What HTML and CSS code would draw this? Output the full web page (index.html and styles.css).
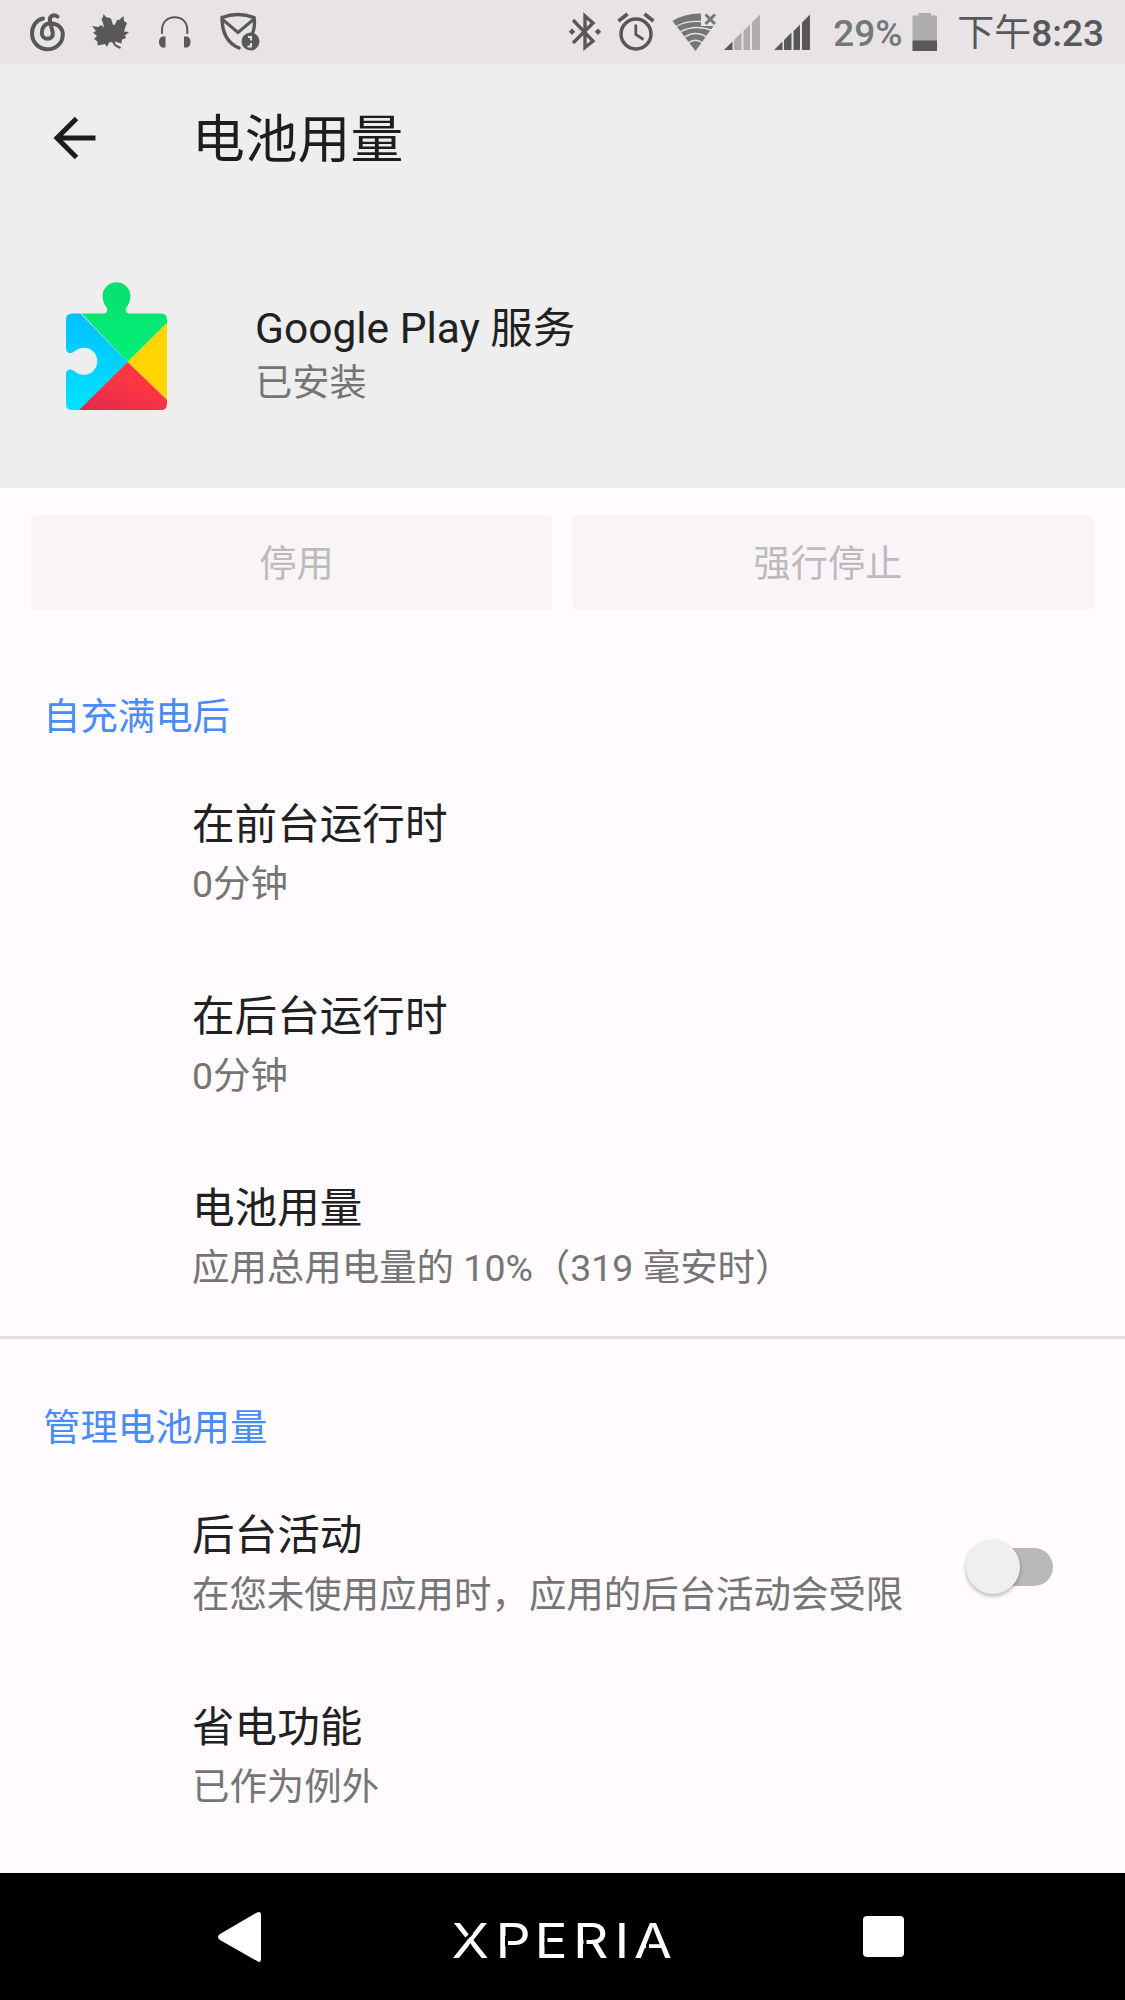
FILE: index.html
```html
<!DOCTYPE html>
<html lang="zh-CN">
<head>
    <meta charset="UTF-8">
    <meta name="viewport" content="width=device-width, initial-scale=1.0">
    <title>电池用量</title>
    <link rel="stylesheet" href="styles.css">
</head>
<body>

    <div class="status-bar">
        <div class="status-left">
            <svg width="60" height="64" viewBox="20 0 60 64" fill="none" stroke="#58585a" stroke-width="4" stroke-linecap="round">
                <path d="M43 18.500C36 20 32 26.500 32 33.500C32 42.500 39 49.300 47.500 49.300C56 49.300 62.800 43 62.800 34.500C62.800 27.500 57 23.200 50.500 23.200C44.500 23.200 41.800 28 41.800 32.500C41.800 36.500 44.500 38.800 47.500 38.800C51 38.800 53.300 36 52.700 32.500L50 21C49 16.500 53.500 13.500 57.500 16.500"/>
            </svg>
            <svg width="63" height="64" viewBox="80 0 63 64" fill="#58585a">
                <path d="M103.500 14L106 17L111 18.500L113 25L115 24.500L117 20L119 20L123.500 16L124 21L127 23L125 28L124 31.500L129 32L125 35.500L126 38L122 39.500L121.500 43.500L114.500 41.500L116 44.500L121 47L120 49L114.500 46L112 42L109 42.500L107 47L105 44L97.500 45.500L97.500 41.500L94 39L97 36L93 32.500L96 31L92 26L98.500 27L101 25L104 27.500L103 23L101.500 19L103 17Z"/>
            </svg>
            <svg width="62" height="64" viewBox="143 0 62 64">
                <path d="M162 34V30C162 22 167.500 17.300 174.700 17.300C182 17.300 187.300 22 187.300 30V34" fill="none" stroke="#58585a" stroke-width="2"/>
                <path d="M165.500 36.500V47.500H163C160.500 47.500 159 45 159 42C159 39 160.500 36.500 163 36.500ZM184 36.500V47.500H186.500C189 47.500 190.500 45 190.500 42C190.500 39 189 36.500 186.500 36.500Z" fill="#58585a"/>
            </svg>
            <svg width="70" height="64" viewBox="205 0 70 64">
                <path d="M222 17.500Q238 11.500 254 17.500C255 24 254.500 28 253 32M222 17.500C222 32 227 43 239 48" fill="none" stroke="#58585a" stroke-width="3.400" stroke-linecap="round"/>
                <path d="M222 19L238 32.500L254 19" fill="none" stroke="#58585a" stroke-width="3"/>
                <circle cx="250.500" cy="41.500" r="9" fill="#58585a"/>
                <path d="M248 37H251V40.500M251 43V46.500H247.500" fill="none" stroke="#e7e3e7" stroke-width="2"/>
            </svg>
        </div>
        <div class="status-right">
            <svg width="50" height="64" viewBox="560 0 50 64" fill="none" stroke="#58585a" stroke-width="3.400">
                <path d="M573 20L593 41L585 47.500V16L593 23L573 43"/>
                <path d="M572 28.500L575.200 31.700L572 34.900L568.800 31.700ZM598 28.500L601.200 31.700L598 34.900L594.800 31.700Z" fill="#58585a" stroke="none"/>
            </svg>
            <svg width="54" height="64" viewBox="610 0 54 64" fill="none" stroke="#58585a">
                <circle cx="636" cy="34" r="15" stroke-width="3.500"/>
                <path d="M635.800 24.500V34.500L643.500 39.500" stroke-width="2.800"/>
                <path d="M618.500 21L627.500 14M653.500 21L644.500 14" stroke-width="3.600"/>
            </svg>
            <svg width="56" height="64" viewBox="664 0 56 64">
                <path d="M672.500 21Q685 13 701 13.500V26H713.500L695.500 51Z" fill="#747775"/>
                <path d="M676 26.500Q686 20.500 701 21.500M680 32Q695.500 23.500 713 31M684 37.500Q695.500 29.500 707.500 37.500M688 43Q695.500 37.500 703 43" fill="none" stroke="#e7e3e7" stroke-width="1.300"/>
                <path d="M705.500 14.500L715 24M715 14.500L705.500 24" stroke="#747775" stroke-width="3"/>
            </svg>
            <svg width="47" height="64" viewBox="720 0 47 64">
                <path d="M724 50L732.500 41.500V50Z" fill="#58585a"/>
                <path d="M734 40L741.500 32.500V50H734ZM743.500 31L750 24.500V50H743.500ZM752 22.500L760 14.500V50H752Z" fill="#aeacae"/>
            </svg>
            <svg width="58" height="64" viewBox="767 0 58 64">
                <path d="M774 50L782.500 41.500V50ZM784 40L791.500 32.500V50H784ZM793.500 31L800 24.500V50H793.500ZM802 22.500L810 14.500V50H802Z" fill="#58585a"/>
            </svg>
            <span class="battery-level">29%</span>
            <svg width="25" height="64" viewBox="912 0 25 64">
                <path d="M912.500 15.500H918.500V13H931V15.500H937V41H912.500Z" fill="#aeacae"/>
                <path d="M912.500 40.500H937V51H912.500Z" fill="#58585a"/>
            </svg>
            <span class="clock">下午<b>8:23</b></span>
        </div>
    </div>

    <header>
        <div class="toolbar">
            <svg class="back" width="44" height="44" viewBox="0 0 44 44" fill="none" stroke="#1c1e1c" stroke-width="5">
                <path d="M43.500 22H4.500M24.500 2.500L5 22L24.500 41.500"/>
            </svg>
            <h1>电池用量</h1>
        </div>
        <div class="app-info">
            <svg class="app-icon" width="101" height="128" viewBox="67 282 100 128" preserveAspectRatio="none">
                <defs>
                    <clipPath id="puzzle">
                        <path d="M73 313.500H104C107 313.500 108.500 311 107.500 308C105 305 103.200 300 103.200 296A13.700 13.700 0 0 1 130.800 296C130.800 300 129 305 126.500 308C125.500 311 127 313.500 130 313.500H161Q167 313.500 167 319.500V404Q167 410 161 410H73Q67 410 67 404V374Q67 369.500 71 369.500C74 369.500 75 371 77 372.500A13.500 13.500 0 1 0 77 350C75 351.500 74 353 71 353Q67 353 67 348V319.500Q67 313.500 73 313.500Z"/>
                    </clipPath>
                    <linearGradient id="blue" x1="0" y1="0" x2="0" y2="1">
                        <stop offset="0" stop-color="#00bfff"/>
                        <stop offset="1" stop-color="#00e3ff"/>
                    </linearGradient>
                    <linearGradient id="red" x1="0" y1="1" x2="0.500" y2="0.300">
                        <stop offset="0" stop-color="#e0264f"/>
                        <stop offset="1" stop-color="#ff3743"/>
                    </linearGradient>
                    <linearGradient id="green" x1="0" y1="0" x2="0" y2="1">
                        <stop offset="0" stop-color="#0ade70"/>
                        <stop offset="1" stop-color="#00f076"/>
                    </linearGradient>
                </defs>
                <g clip-path="url(#puzzle)">
                    <path d="M67 282H167V323L128 362L67 297Z" fill="url(#green)"/>
                    <path d="M67 310H78L128 362L80 411H67Z" fill="url(#blue)"/>
                    <path d="M128 362L168 322V401Z" fill="#ffd500"/>
                    <path d="M128 362L167 400V410H80Z" fill="url(#red)"/>
                </g>
            </svg>
            <div>
                <div class="app-name">Google Play 服务</div>
                <div class="app-state">已安装</div>
            </div>
        </div>
    </header>

    <main>
        <div class="buttons">
            <button disabled><span class="label-disable">停用</span></button>
            <button disabled><span class="label-stop">强行停止</span></button>
        </div>

        <section>
            <h2>自充满电后</h2>
            <div class="item">
                <h3>在前台运行时</h3>
                <p>0分钟</p>
            </div>
            <div class="item">
                <h3>在后台运行时</h3>
                <p>0分钟</p>
            </div>
            <div class="item">
                <h3>电池用量</h3>
                <p>应用总用电量的 10%（319 毫安时）</p>
            </div>
        </section>

        <section class="manage">
            <h2>管理电池用量</h2>
            <div class="item item-switch">
                <div>
                    <h3>后台活动</h3>
                    <p>在您未使用应用时，应用的后台活动会受限</p>
                </div>
                <div class="switch"><span class="knob"></span></div>
            </div>
            <div class="item">
                <h3>省电功能</h3>
                <p>已作为例外</p>
            </div>
        </section>
    </main>

    <nav>
        <svg width="43" height="52" viewBox="0 0 43 52">
            <path d="M39 1.500Q43 -0.500 43 4V48Q43 52.500 39 50L2 29Q-2 26 2 23Z" fill="#fff"/>
        </svg>
        <svg class="brand" width="224" height="70" viewBox="0 0 224 70">
            <text transform="scale(1.15 1)" y="53" x="1.300 39.600 73.500 107 143 160">XPERIA</text>
            <path d="M14 36L22 28M56.500 31V41.500M96 31V40.500M135 31V41M197.500 39V47" class="cut"/>
        </svg>
        <span class="recent"></span>
    </nav>

</body>
</html>
```
FILE: styles.css
```css
body {
    margin: 0;
    width: 1125px;
    height: 2000px;
    display: flex;
    flex-direction: column;
    font-family: Roboto, "Noto Sans CJK SC", sans-serif;
    background-color: #fffbff;
    color: #212121;
    overflow: hidden;
}
svg {
    display: block;
    flex: none;
}
h1, h2, h3, p {
    margin: 0;
    font-weight: normal;
}
.status-bar {
    flex: none;
    height: 64px;
    display: flex;
    justify-content: space-between;
    background-color: #e7e3e7;
    color: #58585a;
    padding: 0 21px 0 20px;
}
.status-left, .status-right {
    display: flex;
    align-items: center;
}
.battery-level {
    width: 79px;
    padding: 4px 0 0 8px;
    font-size: 37px;
    font-weight: 500;
    line-height: 60px;
    color: #747775;
}
.clock {
    margin-left: 20px;
    padding-top: 4px;
    font-size: 37px;
    line-height: 60px;
    white-space: nowrap;
}
.clock b {
    font-weight: 500;
}
header {
    flex: none;
    height: 424px;
    background-color: #eeeeee;
}
.toolbar {
    height: 148px;
    display: flex;
    align-items: center;
    padding-left: 52px;
}
.toolbar h1 {
    margin-left: 96px;
    padding-top: 4px;
    font-size: 52.8px;
    line-height: 60px;
    color: #1c1e1c;
}
.app-info {
    display: flex;
    padding: 70px 0 0 66px;
}
.app-info > div {
    margin-left: 88px;
    padding-top: 20px;
}
.app-name {
    font-size: 42.5px;
    line-height: 54px;
}
.app-state {
    font-size: 37.2px;
    line-height: 54px;
    color: #757575;
}
main {
    flex: 1;
    min-height: 0;
}
.buttons {
    display: grid;
    grid-template-columns: 1fr 1fr;
    gap: 21px;
    padding: 27px 31px 0;
}
button {
    height: 95px;
    padding: 0 0 3px;
    border: none;
    border-radius: 5px;
    background-color: #f8f4f7;
    color: #bcbabc;
    font-family: inherit;
    font-size: 37.2px;
}
.label-disable {
    padding-left: 10px;
}
.label-stop {
    padding-right: 11px;
}
section {
    padding-top: 80px;
}
h2 {
    padding-left: 43px;
    font-size: 37.4px;
    line-height: 54px;
    color: #4a8cf7;
}
.item {
    height: 192px;
    padding-left: 192px;
    box-sizing: border-box;
}
h2 + .item {
    margin-top: 49px;
}
.item h3 {
    font-size: 42.6px;
    line-height: 62px;
}
.item p {
    font-size: 37.45px;
    line-height: 58px;
    color: #757575;
}
.manage {
    margin-top: -33px;
    padding-top: 62px;
    border-top: 3px solid #e0dce0;
}
.item-switch {
    display: flex;
    justify-content: space-between;
    padding-right: 72px;
}
.switch {
    width: 75px;
    height: 38px;
    margin-top: 44px;
    border-radius: 19px;
    background-color: #bab8ba;
}
.knob {
    display: block;
    width: 54px;
    height: 54px;
    margin: -8px 0 0 -12px;
    border-radius: 50%;
    background-color: #efefef;
    box-shadow: 0 2px 4px rgba(0, 0, 0, 0.3);
}
nav {
    flex: none;
    height: 127px;
    display: flex;
    align-items: center;
    padding-left: 218px;
    background-color: #000;
}
.brand {
    margin: 7px 0 0 189px;
    overflow: visible;
}
.brand text {
    font-family: Inter, sans-serif;
    font-size: 48px;
    fill: #fff;
}
.brand .cut {
    fill: none;
    stroke: #000;
    stroke-width: 3;
}
.recent {
    width: 41px;
    height: 41px;
    margin-left: 189px;
    border-radius: 4px;
    background-color: #fff;
}
```
